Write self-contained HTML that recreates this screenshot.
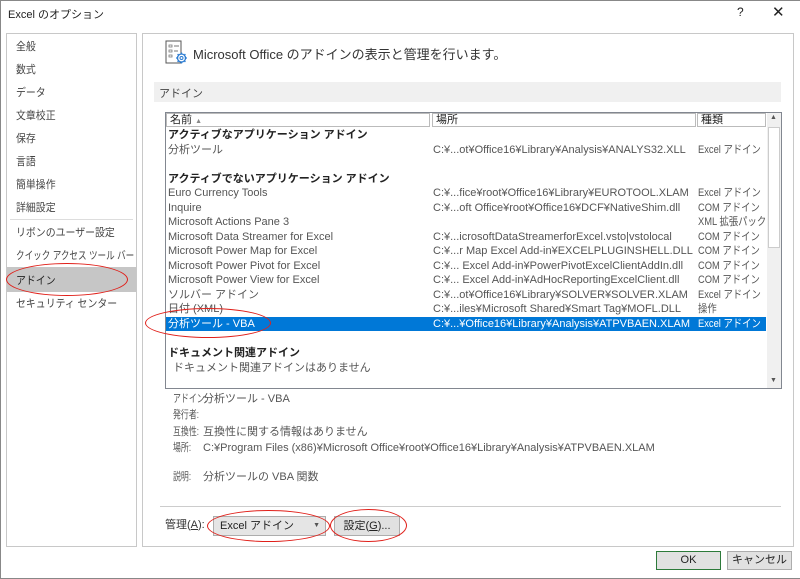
<!DOCTYPE html>
<html><head><meta charset="utf-8"><style>
*{margin:0;padding:0;box-sizing:border-box}
body{width:800px;height:579px;background:#fff;font-family:"Liberation Sans","Noto Sans CJK JP",sans-serif;font-size:11px;color:#444;position:relative;overflow:hidden}
.abs{position:absolute;white-space:nowrap}
.win{position:absolute;left:0;top:0;width:800px;height:579px;border:1px solid #888;border-right:none}
.panel{position:absolute;border:1px solid #c8c8c8;background:#fff}
.nav{position:absolute;left:16px;font-size:11px;color:#444;white-space:nowrap;transform-origin:left;transform:scaleX(.9)}
.row{position:absolute;height:14px;line-height:14px;font-size:11px;color:#555;white-space:nowrap}
.t{transform-origin:left;transform:scaleX(.85)}
.lb{transform-origin:left;transform:scaleX(.72)}
.ell{position:absolute;border:1.5px solid #e0201a;border-radius:50%}
.btn{position:absolute;border:1px solid #adadad;background:#e1e1e1;text-align:center;color:#222;font-size:11px}
</style></head><body>
<div class="win"></div>
<div class="abs" style="left:8px;top:6px;font-size:11px;color:#222">Excel のオプション</div>
<div class="abs" style="left:737px;top:5px;font-size:12px;color:#222">?</div>
<div class="abs" style="left:772px;top:3px;font-size:15px;color:#222">✕</div>

<div class="panel" style="left:6px;top:33px;width:131px;height:514px"></div>
<div class="abs" style="left:7px;top:267px;width:129px;height:25px;background:#c6c6c6"></div>
<div class="abs" style="left:10px;top:219px;width:123px;height:1px;background:#ddd"></div>
<div class="nav" style="top:38px">全般</div>
<div class="nav" style="top:61px">数式</div>
<div class="nav" style="top:84px">データ</div>
<div class="nav" style="top:107px">文章校正</div>
<div class="nav" style="top:130px">保存</div>
<div class="nav" style="top:153px">言語</div>
<div class="nav" style="top:176px">簡単操作</div>
<div class="nav" style="top:199px">詳細設定</div>
<div class="nav" style="top:224px">リボンのユーザー設定</div>
<div class="nav" style="top:247px;transform:scaleX(.78)">クイック アクセス ツール バー</div>
<div class="nav" style="top:272px;color:#222">アドイン</div>
<div class="nav" style="top:295px">セキュリティ センター</div>
<div class="ell" style="left:6px;top:263px;width:122px;height:33px"></div>

<div class="panel" style="left:142px;top:33px;width:652px;height:514px"></div>
<svg class="abs" style="left:165px;top:40px" width="26" height="26" viewBox="0 0 26 26"><path d="M1 1h15v22H1z" fill="none" stroke="#555"/><path d="M4 5h3v2H4zM4 10h3v2H4zM4 15h3v2H4z" fill="none" stroke="#777" stroke-width=".8"/><path d="M9 6h5M9 11h4" stroke="#777"/><circle cx="16.5" cy="18" r="4" fill="#fff" stroke="#2b7cd3" stroke-width="1.3"/><circle cx="16.5" cy="18" r="1.5" fill="none" stroke="#2b7cd3"/><path d="M16.5 12.5v2M16.5 21.5v2M11 18h2M20 18h2M12.6 14.1l1.4 1.4M19 20.5l1.4 1.4M12.6 21.9l1.4-1.4M19 15.5l1.4-1.4" stroke="#2b7cd3" stroke-width="1.3"/></svg>
<div class="abs" style="left:193px;top:44px;font-size:13px;color:#333">Microsoft Office のアドインの表示と管理を行います。</div>
<div class="abs" style="left:154px;top:82px;width:627px;height:20px;background:#f0f0f0"></div>
<div class="abs" style="left:159px;top:85px;font-size:11px;color:#444">アドイン</div>

<div class="abs" style="left:165px;top:112px;width:617px;height:277px;border:1px solid #828790;background:#fff"></div>
<div class="abs" style="left:166px;top:113px;width:264px;height:14px;border:1px solid #bbb;padding-left:3px;line-height:12px;color:#222">名前 <span style="font-size:7px;color:#888">▲</span></div>
<div class="abs" style="left:432px;top:113px;width:264px;height:14px;border:1px solid #bbb;padding-left:3px;line-height:12px;color:#222">場所</div>
<div class="abs" style="left:697px;top:113px;width:69px;height:14px;border:1px solid #bbb;padding-left:3px;line-height:12px;color:#222">種類</div>
<div class="abs" style="left:767px;top:113px;width:14px;height:275px;background:#f0f0f0"></div>
<div class="abs" style="left:768px;top:127px;width:12px;height:121px;background:#fff;border:1px solid #ccc"></div>
<div class="abs" style="left:770px;top:114px;font-size:7px;color:#555">▲</div>
<div class="abs" style="left:770px;top:377px;font-size:7px;color:#555">▼</div>
<div class="abs" style="left:166px;top:317px;width:600px;height:14px;background:#0078d7"></div>

<div class="row" style="left:168px;top:128px;color:#222;font-weight:bold">アクティブなアプリケーション アドイン</div>
<div class="row" style="left:168px;top:143px">分析ツール</div><div class="row" style="left:433px;top:143px">C:¥...ot¥Office16¥Library¥Analysis¥ANALYS32.XLL</div><div class="row t" style="left:698px;top:143px">Excel アドイン</div>
<div class="row" style="left:168px;top:172px;color:#222;font-weight:bold">アクティブでないアプリケーション アドイン</div>
<div class="row" style="left:168px;top:186px">Euro Currency Tools</div><div class="row" style="left:433px;top:186px">C:¥...fice¥root¥Office16¥Library¥EUROTOOL.XLAM</div><div class="row t" style="left:698px;top:186px">Excel アドイン</div>
<div class="row" style="left:168px;top:201px">Inquire</div><div class="row" style="left:433px;top:201px">C:¥...oft Office¥root¥Office16¥DCF¥NativeShim.dll</div><div class="row t" style="left:698px;top:201px">COM アドイン</div>
<div class="row" style="left:168px;top:215px">Microsoft Actions Pane 3</div><div class="row t" style="left:698px;top:215px">XML 拡張パック</div>
<div class="row" style="left:168px;top:230px">Microsoft Data Streamer for Excel</div><div class="row" style="left:433px;top:230px">C:¥...icrosoftDataStreamerforExcel.vsto|vstolocal</div><div class="row t" style="left:698px;top:230px">COM アドイン</div>
<div class="row" style="left:168px;top:244px">Microsoft Power Map for Excel</div><div class="row" style="left:433px;top:244px">C:¥...r Map Excel Add-in¥EXCELPLUGINSHELL.DLL</div><div class="row t" style="left:698px;top:244px">COM アドイン</div>
<div class="row" style="left:168px;top:259px">Microsoft Power Pivot for Excel</div><div class="row" style="left:433px;top:259px">C:¥... Excel Add-in¥PowerPivotExcelClientAddIn.dll</div><div class="row t" style="left:698px;top:259px">COM アドイン</div>
<div class="row" style="left:168px;top:273px">Microsoft Power View for Excel</div><div class="row" style="left:433px;top:273px">C:¥... Excel Add-in¥AdHocReportingExcelClient.dll</div><div class="row t" style="left:698px;top:273px">COM アドイン</div>
<div class="row" style="left:168px;top:288px">ソルバー アドイン</div><div class="row" style="left:433px;top:288px">C:¥...ot¥Office16¥Library¥SOLVER¥SOLVER.XLAM</div><div class="row t" style="left:698px;top:288px">Excel アドイン</div>
<div class="row" style="left:168px;top:302px">日付 (XML)</div><div class="row" style="left:433px;top:302px">C:¥...iles¥Microsoft Shared¥Smart Tag¥MOFL.DLL</div><div class="row t" style="left:698px;top:302px">操作</div>
<div class="row" style="left:168px;top:317px;color:#fff">分析ツール - VBA</div><div class="row" style="left:433px;top:317px;color:#fff">C:¥...¥Office16¥Library¥Analysis¥ATPVBAEN.XLAM</div><div class="row t" style="left:698px;top:317px;color:#fff">Excel アドイン</div>
<div class="row" style="left:168px;top:346px;color:#222;font-weight:bold">ドキュメント関連アドイン</div>
<div class="row" style="left:173px;top:361px">ドキュメント関連アドインはありません</div>
<div class="ell" style="left:145px;top:308px;width:126px;height:30px"></div>

<div class="row lb" style="left:173px;top:392px">アドイン:</div><div class="row" style="left:203px;top:392px">分析ツール - VBA</div>
<div class="row lb" style="left:173px;top:408px">発行者:</div>
<div class="row lb" style="left:173px;top:425px">互換性:</div><div class="row" style="left:203px;top:425px">互換性に関する情報はありません</div>
<div class="row lb" style="left:173px;top:441px">場所:</div><div class="row" style="left:203px;top:441px">C:¥Program Files (x86)¥Microsoft Office¥root¥Office16¥Library¥Analysis¥ATPVBAEN.XLAM</div>
<div class="row lb" style="left:173px;top:470px">説明:</div><div class="row" style="left:203px;top:470px">分析ツールの VBA 関数</div>
<div class="abs" style="left:160px;top:506px;width:621px;height:1px;background:#ccc"></div>
<div class="row" style="left:165px;top:518px;color:#333">管理(<u>A</u>):</div>
<div class="abs" style="left:213px;top:516px;width:113px;height:20px;border:1px solid #adadad;background:#e5e5e5;padding-left:6px;line-height:18px;color:#222">Excel アドイン<span style="position:absolute;right:5px;font-size:7px;color:#555">▼</span></div>
<div class="btn" style="left:334px;top:516px;width:66px;height:20px;line-height:18px">設定(<u>G</u>)...</div>
<div class="ell" style="left:207px;top:510px;width:123px;height:32px"></div>
<div class="ell" style="left:330px;top:509px;width:77px;height:33px"></div>

<div class="btn" style="left:656px;top:551px;width:65px;height:19px;line-height:17px;border:1.5px solid #2d7a3a">OK</div>
<div class="btn" style="left:727px;top:551px;width:65px;height:19px;line-height:17px">キャンセル</div>
</body></html>
